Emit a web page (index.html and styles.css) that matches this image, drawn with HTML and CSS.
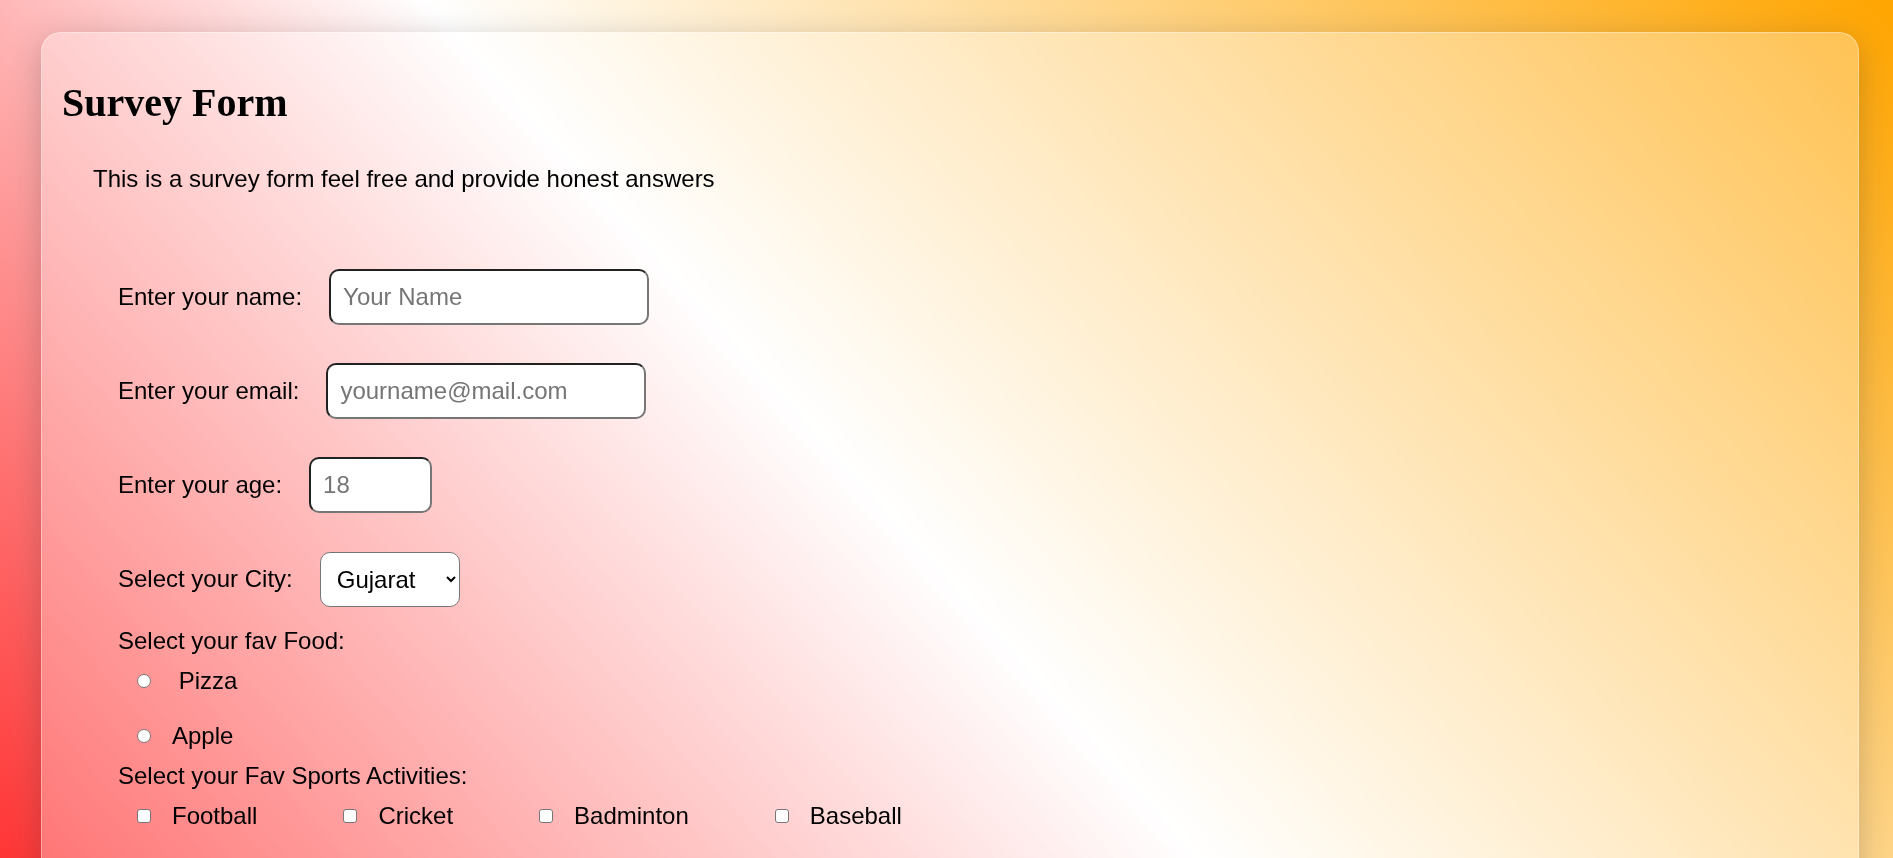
FILE: index.html
```html
<!DOCTYPE html>
<html lang="en">
<head>
<meta charset="utf-8">
<title>Survey Form</title>
<link rel="stylesheet" href="styles.css">
</head>
<body>
<main class="card">
  <h1 class="title">Survey Form</h1>
  <p class="intro">This is a survey form feel free and provide honest answers</p>
  <form class="survey">
    <div class="field">
      <label for="name">Enter your name:</label>
      <input class="text-input" type="text" id="name" placeholder="Your Name">
    </div>
    <div class="field">
      <label for="email">Enter your email:</label>
      <input class="text-input" type="email" id="email" placeholder="yourname@mail.com">
    </div>
    <div class="field">
      <label for="age">Enter your age:</label>
      <input class="text-input age-input" type="number" id="age" placeholder="18">
    </div>
    <div class="field field-last">
      <label for="city">Select your City:</label>
      <select id="city" class="city-select">
        <option>Gujarat</option>
        <option>Delhi</option>
        <option>Goa</option>
      </select>
    </div>
    <div class="group-title food-title">Select your fav Food:</div>
    <div class="option">
      <input class="radio" type="radio" name="food" id="pizza"><label for="pizza">&nbsp;Pizza</label>
    </div>
    <div class="option">
      <input class="radio" type="radio" name="food" id="apple"><label for="apple">Apple</label>
    </div>
    <div class="group-title sports-title">Select your Fav Sports Activities:</div>
    <div class="checks">
      <div class="check"><input class="checkbox" type="checkbox" id="football"><label for="football">Football</label></div>
      <div class="check"><input class="checkbox" type="checkbox" id="cricket"><label for="cricket">Cricket</label></div>
      <div class="check"><input class="checkbox" type="checkbox" id="badminton"><label for="badminton">Badminton</label></div>
      <div class="check"><input class="checkbox" type="checkbox" id="baseball"><label for="baseball">Baseball</label></div>
    </div>
  </form>
</main>
</body>
</html>
```

FILE: styles.css
```css
html {
  height: 100%;
}

body {
  margin: 0;
  min-height: 100%;
  overflow: hidden;
  font-family: "Liberation Serif", "Times New Roman", serif;
  color: #000;
  background: linear-gradient(48deg, #ff3535 0%, #ffffff 45%, #ffa500 100%);
}

.card {
  margin: 32px 34px 0 41px;
  min-height: 900px;
  padding: 20px;
  border: 1px solid rgba(255, 255, 255, 0.35);
  border-radius: 20px;
  background: rgba(255, 255, 255, 0.3);
  box-shadow: 0 8px 32px rgba(40, 30, 30, 0.25);
  backdrop-filter: blur(4px);
}

.title {
  margin: 26px 0 0;
  font-size: 40px;
  font-weight: bold;
  line-height: normal;
}

.intro {
  margin: 39px 0 0 31px;
  font-family: "Liberation Sans", Arial, sans-serif;
  font-size: 24px;
  line-height: normal;
}

.survey {
  margin: 76px 0 0 56px;
  font-family: "Liberation Sans", Arial, sans-serif;
  font-size: 24px;
  line-height: normal;
}

.field {
  display: flex;
  align-items: center;
  gap: 27px;
  height: 56px;
  margin-bottom: 38px;
}

.field-last {
  margin-bottom: 0;
}

.text-input {
  box-sizing: border-box;
  width: 320px;
  height: 56px;
  padding: 0 12px;
  border: 2px inset #767676;
  border-radius: 10px;
  background: #fff;
  font: inherit;
  color: #000;
}

.text-input::placeholder {
  color: #757575;
}

.age-input {
  width: 123px;
}

.city-select {
  box-sizing: border-box;
  width: 140px;
  height: 55px;
  padding: 0 10px 0 12px;
  border: 1px solid #767676;
  border-radius: 10px;
  background: #fff;
  font: inherit;
  color: #000;
}

.food-title {
  margin-top: 20px;
}

.sports-title {
  margin-top: 12px;
}

.option {
  display: flex;
  align-items: center;
  padding-left: 19px;
  margin-top: 12px;
}

.option + .option {
  margin-top: 27px;
}

.radio,
.checkbox {
  appearance: none;
  -webkit-appearance: none;
  box-sizing: border-box;
  width: 14px;
  height: 14px;
  margin: 0;
  border: 1px solid #767676;
  background: #fff;
}

.radio {
  border-radius: 50%;
}

.checkbox {
  border-radius: 3px;
}

.option label,
.check label {
  margin-left: 21px;
}

.checks {
  display: flex;
  align-items: center;
  gap: 86px;
  padding-left: 19px;
  margin-top: 12px;
}

.check {
  display: flex;
  align-items: center;
}
```
